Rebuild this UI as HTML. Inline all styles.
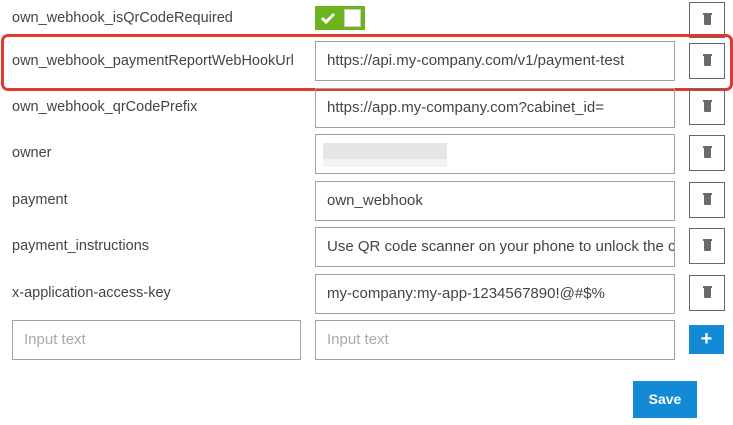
<!DOCTYPE html>
<html><head><style>
body{margin:0;width:733px;height:425px;background:#fff;font-family:"Liberation Sans",sans-serif;position:relative;overflow:hidden}
.l{position:absolute;left:12px;font-size:14.5px;color:#444;line-height:16px}
.i{position:absolute;left:315px;height:38px;border:1px solid #a0a0a8;box-sizing:content-box;font-size:15px;color:#444;line-height:38px;padding-left:11px;width:347px;white-space:nowrap;overflow:hidden}
.d{position:absolute;left:689px;width:34px;height:34px;border:1px solid #666}
.d:after{content:"";position:absolute;left:14px;top:12px;width:7px;height:10px;background:#6a6a6a;border-radius:0 0 1px 1px}
.d:before{content:"";position:absolute;left:13px;top:10px;width:9px;height:2px;background:#6a6a6a}
.ph{color:#aaa}
</style></head><body>
<div class="l" style="top:10px">own_webhook_isQrCodeRequired</div>
<div style="position:absolute;left:315px;top:6px;width:50px;height:24px;background:#6bb41e">
<svg width="20" height="24" style="position:absolute;left:4px;top:0"><path d="M3 12l4 4 8-8" stroke="#fff" stroke-width="3" fill="none"/></svg>
<div style="position:absolute;left:29px;top:3px;width:17px;height:18px;background:#fff;border:1px solid #ccc;box-sizing:border-box"></div></div>
<div class="d" style="top:2px"></div>

<div style="position:absolute;left:1px;top:34px;width:726px;height:51px;border:3px solid #e03a2f;border-radius:7px"></div>
<div class="l" style="top:53px">own_webhook_paymentReportWebHookUrl</div>
<div class="i" style="top:41px">https://api.my-company.com/v1/payment-test</div>
<div class="d" style="top:43px"></div>

<div class="l" style="top:99px">own_webhook_qrCodePrefix</div>
<div class="i" style="top:88px">https://app.my-company.com?cabinet_id=</div>
<div class="d" style="top:89px"></div>

<div class="l" style="top:145px">owner</div>
<div class="i" style="top:134px"><div style="position:absolute;left:7px;top:8px;width:124px;height:16px;background:#e6e6e6"></div><div style="position:absolute;left:7px;top:24px;width:124px;height:8px;background:#f3f3f3"></div></div>
<div class="d" style="top:135px"></div>

<div class="l" style="top:192px">payment</div>
<div class="i" style="top:181px">own_webhook</div>
<div class="d" style="top:182px"></div>

<div class="l" style="top:238px">payment_instructions</div>
<div class="i" style="top:227px">Use QR code scanner on your phone to unlock the c</div>
<div class="d" style="top:228px"></div>

<div class="l" style="top:285px">x-application-access-key</div>
<div class="i" style="top:274px">my-company:my-app-1234567890!@#$%</div>
<div class="d" style="top:275px"></div>

<div class="i ph" style="top:320px;left:12px;width:276px">Input text</div>
<div class="i ph" style="top:320px">Input text</div>
<div style="position:absolute;left:689px;top:325px;width:35px;height:29px;background:#138ad6;color:#fff;font-weight:bold;font-size:20px;text-align:center;line-height:29px">+</div>
<div style="position:absolute;left:633px;top:381px;width:64px;height:37px;background:#138ad6;color:#fff;font-weight:bold;font-size:14px;text-align:center;line-height:37px">Save</div>
</body></html>
